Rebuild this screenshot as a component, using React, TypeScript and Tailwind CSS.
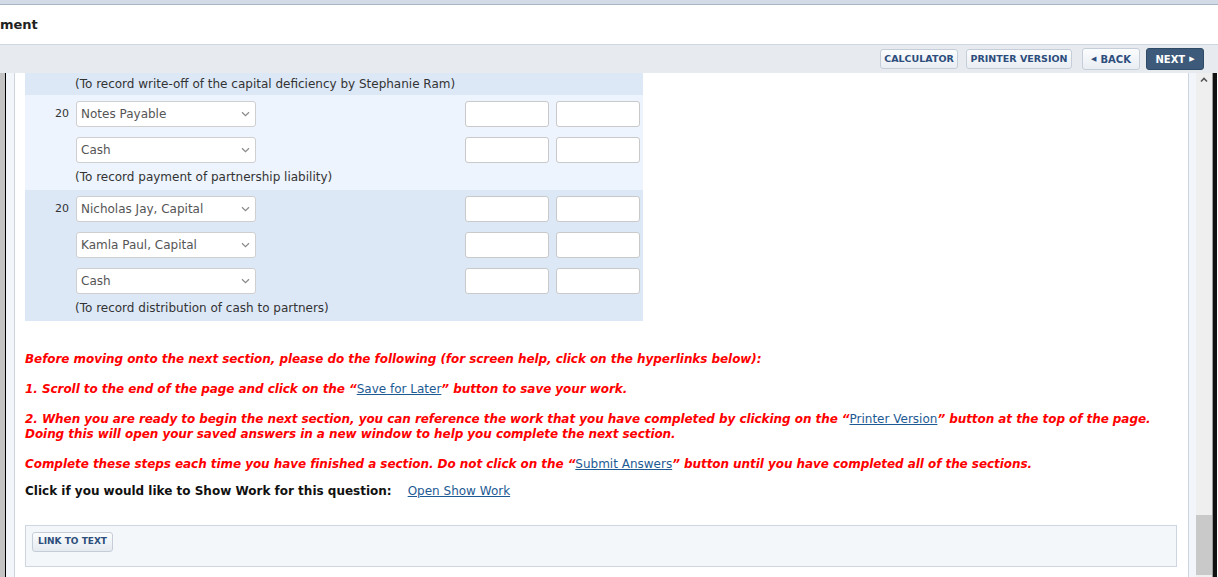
import React from 'react';

interface Line {
  num?: string;
  account: string;
}

interface Group {
  lines: Line[];
  note: string;
  dark: boolean;
}

const groups: Group[] = [
  {
    dark: false,
    note: '(To record payment of partnership liability)',
    lines: [{ num: '20', account: 'Notes Payable' }, { account: 'Cash' }],
  },
  {
    dark: true,
    note: '(To record distribution of cash to partners)',
    lines: [
      { num: '20', account: 'Nicholas Jay, Capital' },
      { account: 'Kamla Paul, Capital' },
      { account: 'Cash' },
    ],
  },
];

const Chevron = () => (
  <svg width="9" height="6" viewBox="0 0 9 6" className="shrink-0">
    <path d="M1 1.2 L4.5 4.6 L8 1.2" fill="none" stroke="#8a8a8a" strokeWidth="1.2" />
  </svg>
);

const ToolButton: React.FC<{ children: React.ReactNode; dark?: boolean; className?: string }> = ({ children, dark, className }) => (
  <button
    className={
      dark
        ? `flex items-center justify-center gap-1 rounded-[3px] border border-[#2f4a66] bg-[#3d5a7a] text-[9.5px] font-bold text-white ${className}`
        : `flex items-center justify-center gap-1 rounded-[3px] border border-[#c5ced8] bg-gradient-to-b from-[#fbfcfd] to-[#e9eef3] text-[9.5px] font-bold text-[#2d4d7c] ${className}`
    }
  >
    {children}
  </button>
);

const EntryRow: React.FC<Line> = ({ num, account }) => (
  <div className="grid h-[26px] grid-cols-[51px_180px_209px_84px_84px] items-center">
    <div className="pr-[7px] text-right text-[11px] text-[#333]">{num}</div>
    <div className="flex h-[26px] items-center justify-between rounded-[3px] border border-[#cfcfcf] bg-white pl-[4px] pr-[5px] text-[12px] text-[#555]">
      <span>{account}</span>
      <Chevron />
    </div>
    <div />
    <div className="h-[26px] w-[84px] rounded-[3px] border border-[#c9c9c9] bg-white" />
    <div className="ml-[7px] h-[26px] w-[84px] rounded-[3px] border border-[#c9c9c9] bg-white" />
  </div>
);

const Link: React.FC<{ children: React.ReactNode }> = ({ children }) => (
  <a className="font-normal not-italic tracking-normal text-[#1d5a93] underline">{children}</a>
);

export default function App() {
  return (
    <div className="flex h-[577px] w-[1218px] flex-col overflow-hidden bg-white font-['DejaVu_Sans',sans-serif] text-[12px] text-[#333]">
      {/* top strip */}
      <div className="h-[5px] shrink-0 border-b border-[#a7b5c4] bg-[#d3dce6]" />
      {/* title bar */}
      <div className="flex h-[40px] shrink-0 items-center border-b border-[#cfd6dd] bg-white pt-[1px]">
        <span className="text-[13px] font-bold text-[#222]">ment</span>
      </div>
      {/* toolbar */}
      <div className="flex h-[28px] shrink-0 items-center justify-end bg-[#e7ebef] pr-[14px]">
        <ToolButton className="h-[20px] w-[78px]">CALCULATOR</ToolButton>
        <ToolButton className="ml-[8px] h-[20px] w-[106px]">PRINTER VERSION</ToolButton>
        <ToolButton className="ml-[10px] h-[22px] w-[58px] text-[10px]">
          <span className="text-[7px]">◀</span>BACK
        </ToolButton>
        <ToolButton dark className="ml-[6px] h-[22px] w-[58px] text-[10px]">
          NEXT<span className="text-[7px]">▶</span>
        </ToolButton>
      </div>

      {/* content frame */}
      <div className="flex min-h-0 flex-1">
        <div className="w-[5px] bg-[#c3c3c3]" />
        <div className="w-[1px] bg-black" />
        <div className="w-[8px] bg-[#f2f6fb]" />
        <div className="flex w-[1175px] flex-col overflow-hidden border-x border-[#ccd5e0] bg-white pl-[10px] pr-[10px]">
          {/* journal table */}
          <div className="w-[618px]">
            <div className="flex h-[22px] items-center bg-[#dde8f7] pl-[50px]">
              (To record write-off of the capital deficiency by Stephanie Ram)
            </div>
            {groups.map((g, gi) => (
              <div key={gi} className={`flex flex-col pb-[6px] pt-[6px] ${g.dark ? 'bg-[#dde8f7]' : 'bg-[#edf4fd]'}`}>
                <div className="flex flex-col gap-[10px]">
                  {g.lines.map((l, li) => (
                    <EntryRow key={li} num={l.num} account={l.account} />
                  ))}
                </div>
                <div className="mt-[7px] h-[14px] pl-[50px] leading-[14px]">{g.note}</div>
              </div>
            ))}
          </div>

          {/* instructions */}
          <div className="mt-[31px] flex flex-col gap-[15px] text-[12px] font-bold italic leading-[15px] tracking-[-0.06px] text-[#ff0000]">
            <p>Before moving onto the next section, please do the following (for screen help, click on the hyperlinks below):</p>
            <p>
              1. Scroll to the end of the page and click on the “<Link>Save for Later</Link>” button to save your work.
            </p>
            <p>
              2. When you are ready to begin the next section, you can reference the work that you have completed by clicking on the “<Link>Printer Version</Link>” button at the top of the page.
              <br />
              Doing this will open your saved answers in a new window to help you complete the next section.
            </p>
            <p>
              Complete these steps each time you have finished a section. Do not click on the “<Link>Submit Answers</Link>” button until you have completed all of the sections.
            </p>
          </div>

          <div className="mt-[12px] flex h-[15px] items-center text-[12px] leading-[15px]">
            <span className="font-bold text-[#111]">Click if you would like to Show Work for this question:</span>
            <a className="ml-[16px] text-[#1d5a93] underline">Open Show Work</a>
          </div>

          <div className="mt-[26px] flex h-[42px] w-[1152px] shrink-0 items-start border border-[#cdd6e1] bg-[#f4f7fa] pl-[6px] pt-[6px]">
            <button className="h-[20px] rounded-[3px] border border-[#c5ced8] bg-gradient-to-b from-[#fbfcfd] to-[#e6ebf0] px-[5px] text-[9px] font-bold text-[#2d4d7c]">
              LINK TO TEXT
            </button>
          </div>
        </div>
        <div className="w-[7px] bg-[#f2f6fb]" />
        {/* scrollbar */}
        <div className="flex w-[16px] flex-col bg-[#efefef]">
          <div className="flex h-[14px] items-center justify-center">
            <svg width="8" height="6" viewBox="0 0 8 6">
              <path d="M1 4.5 L4 1.5 L7 4.5" fill="none" stroke="#555" strokeWidth="1.6" />
            </svg>
          </div>
          <div className="flex-1" />
          <div className="mb-[2px] h-[60px] bg-[#c9c9c9]" />
        </div>
        <div className="w-[1px] bg-[#9a9a9a]" />
        <div className="w-[4px] bg-[#111]" />
      </div>
    </div>
  );
}
